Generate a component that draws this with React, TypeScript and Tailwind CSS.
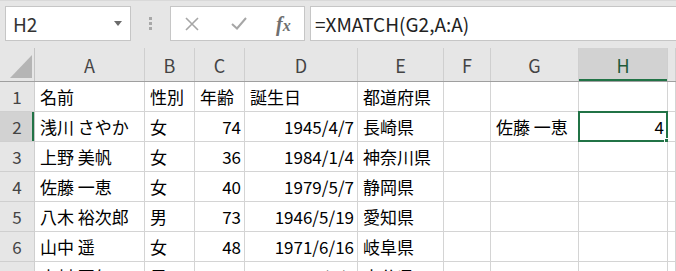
import React from 'react'

const colW = ['w-[110px]', 'w-[50px]', 'w-[50px]', 'w-[113px]', 'w-[86px]', 'w-[47px]', 'w-[88px]', 'w-[89px]', 'flex-1']
// column I is cut off by the window edge, its letter is not visible
const letters = ['A', 'B', 'C', 'D', 'E', 'F', 'G', 'H', '']

// right-aligned columns for data rows (numbers)
const numCols = [2, 3, 7]

const rows: string[][] = [
  ['名前', '性別', '年齢', '誕生日', '都道府県', '', '', '', ''],
  ['浅川 さやか', '女', '74', '1945/4/7', '長崎県', '', '佐藤 一恵', '4', ''],
  ['上野 美帆', '女', '36', '1984/1/4', '神奈川県', '', '', '', ''],
  ['佐藤 一恵', '女', '40', '1979/5/7', '静岡県', '', '', '', ''],
  ['八木 裕次郎', '男', '73', '1946/5/19', '愛知県', '', '', '', ''],
  ['山中 遥', '女', '48', '1971/6/16', '岐阜県', '', '', '', ''],
  ['木村 亜矢', '男', '52', '1967/8/3', '大分県', '', '', '', ''],
]

function FormulaBar() {
  return (
    <div className="flex h-[48px] items-start bg-[#e6e6e6] pt-[5px] border-t border-[#d9d9d9]">
      <div className="ml-[5px] flex h-[35px] w-[126px] items-center justify-between border border-[#c6c6c6] bg-white pl-[7px] pr-[8px]">
        <span className="text-[19px] leading-none text-[#333]">H2</span>
        <svg width="8" height="5" viewBox="0 0 8 5">
          <path d="M0 0H8L4 5Z" fill="#6b6b6b" />
        </svg>
      </div>
      <div className="flex h-[35px] w-[39px] flex-col items-center justify-center gap-[2px]">
        <div className="h-[3px] w-[3px] bg-[#a8a8a8]" />
        <div className="h-[3px] w-[3px] bg-[#a8a8a8]" />
        <div className="h-[3px] w-[3px] bg-[#a8a8a8]" />
      </div>
      <div className="flex h-[35px] w-[135px] items-center border border-[#c6c6c6] bg-white">
        <svg className="ml-[14px]" width="14" height="14" viewBox="0 0 14 14">
          <path d="M1 1L13 13M13 1L1 13" stroke="#a6a6a6" strokeWidth="1.6" />
        </svg>
        <svg className="ml-[32px]" width="16" height="13" viewBox="0 0 16 13">
          <path d="M1 7L6 11.5L15 1" stroke="#a6a6a6" strokeWidth="2" fill="none" />
        </svg>
        <span className="ml-[29px] font-['Liberation_Serif',serif] text-[20px] font-bold italic leading-none text-[#6f6f6f]">
          f<span className="text-[16px]">x</span>
        </span>
      </div>
      <div className="ml-[5px] -mr-[2px] flex h-[35px] flex-1 items-center border border-[#c6c6c6] bg-white pl-[4px]">
        <span className="text-[19px] leading-none text-[#222]">=XMATCH(G2,A:A)</span>
      </div>
    </div>
  )
}

function HeaderRow() {
  return (
    <div className="flex h-[34px] border-b border-[#9f9f9f] bg-[#e6e6e6]">
      <div className="relative w-[35px] shrink-0 border-r border-[#c4c4c4]">
        <svg className="absolute left-[10px] top-[7px]" width="22" height="23" viewBox="0 0 22 23">
          <path d="M22 0V23H0Z" fill="#b5b5b5" />
        </svg>
      </div>
      {letters.map((l, i) => (
        <div
          key={i}
          className={`${colW[i]} shrink-0 flex items-center justify-center border-r border-[#cfcfcf] text-[18px] leading-none ${
            l === 'H' ? 'bg-[#d2d2d2] text-[#1f5c3a] shadow-[inset_0_-2px_0_#217346]' : 'text-[#444]'
          }`}
        >
          {l}
        </div>
      ))}
    </div>
  )
}

function DataRow({ n, cells }: { n: number; cells: string[] }) {
  const active = n === 2
  return (
    <div className="flex h-[30px] shrink-0">
      <div
        className={`flex w-[35px] shrink-0 items-center justify-center border-b border-r text-[17px] leading-none text-[#444] ${
          active ? 'border-b-[#cfcfcf] border-r-[#c4c4c4] bg-[#d2d2d2] shadow-[inset_-2px_0_0_#217346]' : 'border-[#cfcfcf] bg-[#e6e6e6]'
        }`}
      >
        {n}
      </div>
      {cells.map((c, i) => {
        const right = n > 1 && numCols.includes(i)
        const selected = active && i === 7
        return (
          <div
            key={i}
            className={`${colW[i]} relative shrink-0 flex items-center overflow-visible whitespace-nowrap border-b border-r border-[#d4d4d4] bg-white text-[17px] leading-none text-black ${
              right ? 'justify-end pr-[3px]' : 'pl-[5px]'
            }`}
          >
            {c}
            {selected && (
              <>
                <div className="pointer-events-none absolute -left-px -top-px h-[31px] w-[90px] border-2 border-[#217346]" />
                <div className="absolute -bottom-[3px] -right-[3px] h-[6px] w-[6px] border border-white bg-[#217346]" />
              </>
            )}
          </div>
        )
      })}
    </div>
  )
}

export default function App() {
  return (
    <div className="h-[271px] w-[676px] overflow-hidden bg-white font-['Noto_Sans_CJK_JP','Noto_Sans',sans-serif]">
      <FormulaBar />
      <HeaderRow />
      {rows.map((r, i) => (
        <DataRow key={i} n={i + 1} cells={r} />
      ))}
    </div>
  )
}
